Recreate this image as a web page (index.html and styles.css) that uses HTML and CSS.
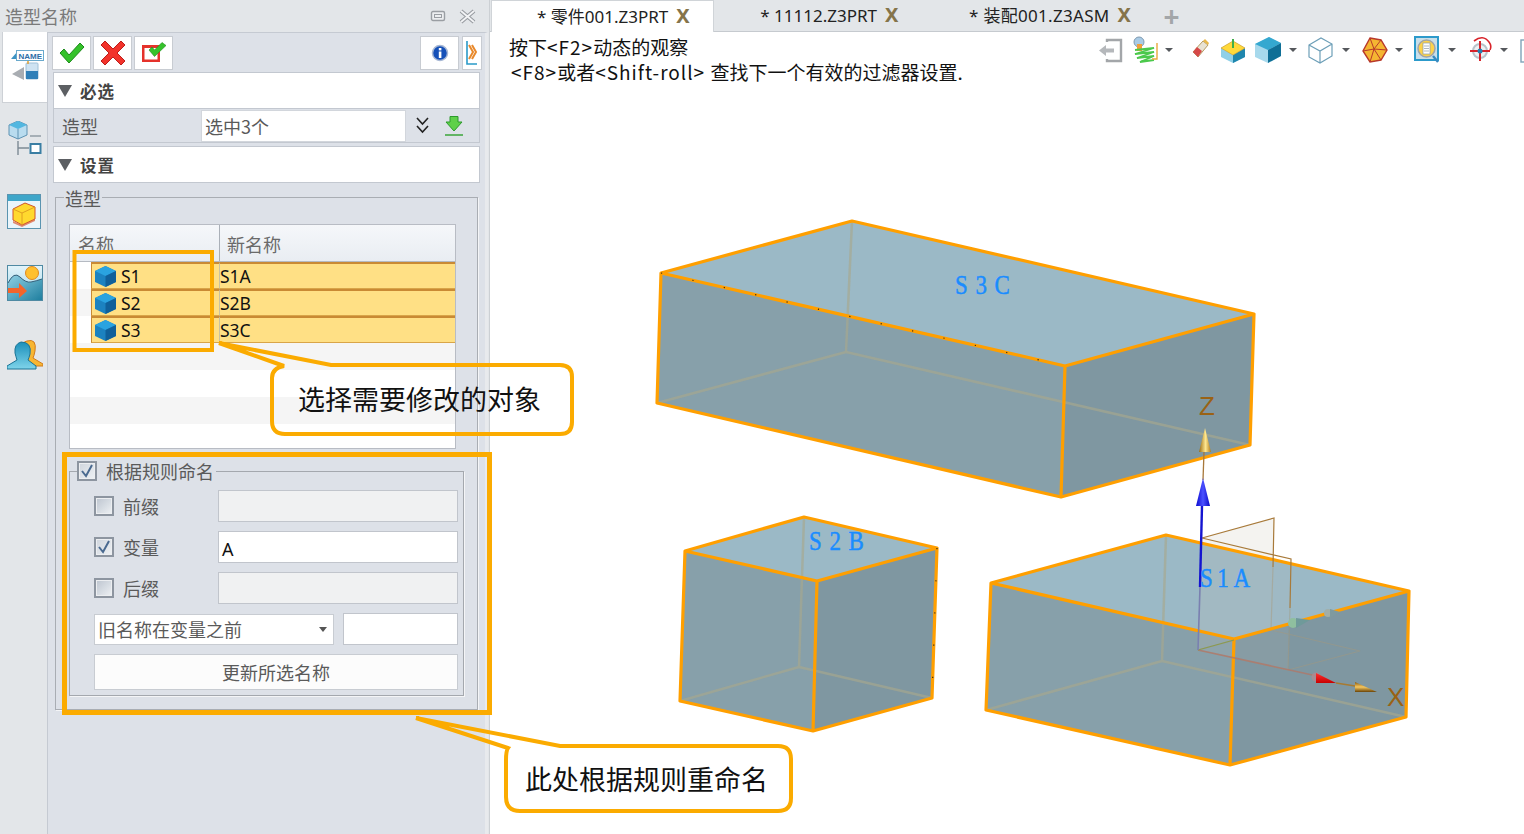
FILE: index.html
```html
<!DOCTYPE html>
<html lang="zh">
<head>
<meta charset="utf-8">
<title>造型名称</title>
<link rel="stylesheet" href="styles.css">
</head>
<body>
<div class="app">
  <aside class="side">
    <header class="title">
      <span>造型名称</span>
      <span class="title-icons">
        <svg width="16" height="12" viewBox="0 0 16 12"><rect x="1.5" y="1.5" width="13" height="9" rx="1.5" fill="#eceef0" stroke="#9a9ea3" stroke-width="1.4"/><rect x="4.5" y="4.5" width="7" height="3" fill="none" stroke="#9a9ea3"/></svg>
        <svg width="19" height="15" viewBox="0 0 19 15"><path d="M3 2 L16 13 M16 2 L3 13" stroke="#979ba0" stroke-width="4"/><path d="M3 2 L16 13 M16 2 L3 13" stroke="#f2f3f5" stroke-width="1.8"/></svg>
      </span>
    </header>
    <div class="side-body">
      <nav class="rail">
        <div class="rail-active">
          <svg width="34" height="32" viewBox="0 0 34 32"><path d="M1 9 L7 2 V9 Z" fill="#3d93c4"/><rect x="6.5" y="0.5" width="27" height="10" fill="#fff" stroke="#6aa9cc"/><text x="8.5" y="9" class="name-ico">NAME</text><path d="M2 24 L14 17 L14 30 Z" fill="#a9adb2"/><rect x="16" y="13" width="12" height="16" rx="1" fill="#cfe3f2" stroke="#9fc0d8"/><rect x="16" y="21" width="12" height="8" fill="#2f7fb8"/><path d="M18 11 V14" stroke="#e0a030" stroke-width="1.5"/></svg>
        </div>
        <svg class="rail-first" width="34" height="37" viewBox="0 0 34 37"><path d="M10 0 L19 4 L19 14 L10 18 L1 14 L1 4 Z" fill="#b9dcef" stroke="#5e93b3"/><path d="M10 0 L19 4 L10 8 L1 4 Z" fill="#52b7e0"/><path d="M10 8 L10 18" stroke="#5e93b3"/><path d="M22 15 H33" stroke="#7d8a94" stroke-width="1.2"/><path d="M10 20 V34 M10 27 H21" stroke="#7d8a94" stroke-width="1.4"/><rect x="22.5" y="23" width="10" height="9" fill="#fff" stroke="#3a7ea3" stroke-width="2"/></svg>
        <svg width="34" height="35" viewBox="0 0 34 35"><rect x="0.5" y="0.5" width="33" height="34" fill="#eaf5fb" stroke="#5a94b0"/><rect x="1" y="1" width="32" height="6" fill="#3fa6c9"/><path d="M6 27 L15 31 L28 25 V27 L15 33 L6 29 Z" fill="#e08a70"/><path d="M6 15 L18 9 L28 13 L28 25 L15 31 L6 26 Z" fill="#ffd92e" stroke="#d0552a"/><path d="M6 15 L15 19 L28 13 M15 19 V31" fill="none" stroke="#e0a020"/></svg>
        <svg width="36" height="38" viewBox="0 0 36 38"><defs><linearGradient id="sky" x1="0" x2="0" y1="0" y2="1"><stop offset="0" stop-color="#e4f4fa"/><stop offset="1" stop-color="#9ed6e8"/></linearGradient><linearGradient id="hill" x1="0" x2="1" y1="0" y2="1"><stop offset="0" stop-color="#8fd0e4"/><stop offset="1" stop-color="#1f7f9f"/></linearGradient></defs><rect x="0.5" y="0.5" width="35" height="35" fill="url(#sky)" stroke="#4f8aa3"/><path d="M1 18 Q7 6 13 12 T24 17 T35 14 V35 H1 Z" fill="url(#hill)"/><path d="M1 18 Q7 6 13 12 T24 17 T35 14" fill="none" stroke="#35607a"/><circle cx="25" cy="8" r="6.5" fill="#ffc02e" stroke="#e08a20"/><path d="M1 23 H12 V18 L20 26 L12 33 V28 H1 Z" fill="#f4652a"/></svg>
        <svg width="36" height="31" viewBox="0 0 36 31"><defs><linearGradient id="person" x1="0" x2="0" y1="0" y2="1"><stop offset="0" stop-color="#1a8fba"/><stop offset="1" stop-color="#7fd4ea"/></linearGradient></defs><path d="M20 2 Q30 -1 28 12 Q27 17 26 19 L36 25 V27 H22 L14 10 Q15 3 20 2 Z" fill="#f7b632" stroke="#d07a1c"/><path d="M14 3 Q25 3 23 15 Q22 19 21 21 L29 27 V30 H0 V27 L10 21 Q9 18 8 14 Q7 5 14 3 Z" fill="url(#person)" stroke="#1a7394"/></svg>
      </nav>
      <main class="dialog">
        <div class="actions">
          <button class="act">
            <svg width="26" height="22" viewBox="0 0 26 22"><path d="M1 11 L5 7 L10 13 L21 1 L25 5 L10 21 Z" fill="#35c22b" stroke="#1c8a1a"/></svg>
          </button>
          <button class="act">
            <svg width="26" height="26" viewBox="0 0 26 26"><path d="M1 5 L5 1 L13 9 L21 1 L25 5 L17 13 L25 21 L21 25 L13 17 L5 25 L1 21 L9 13 Z" fill="#f2332b" stroke="#bd1e1a"/></svg>
          </button>
          <button class="act">
            <svg width="26" height="22" viewBox="0 0 26 22"><path d="M1 3 H19 V20 H1 Z M3.5 6 V17.5 H16.5 V6 Z" fill="#e5322b" fill-rule="evenodd"/><path d="M8 8 L11 5 L13.5 8 L21 0.5 L25 3.5 L13.5 14.5 Z" fill="#35c22b" stroke="#1c8a1a" stroke-width=".6"/></svg>
          </button>
          <span class="act-space"></span>
          <button class="act">
            <svg width="18" height="18" viewBox="0 0 18 18"><circle cx="9" cy="9" r="7.5" fill="#1550b8" stroke="#a8b8d4" stroke-width="1.5"/><rect x="7.8" y="7.5" width="2.6" height="6.5" fill="#fff"/><rect x="7.8" y="4" width="2.6" height="2.4" fill="#fff"/></svg>
          </button>
          <button class="act act-narrow">
            <svg width="12" height="26" viewBox="0 0 12 26"><path d="M1 1 V24 H11" fill="none" stroke="#2a9ac8" stroke-width="1.6"/><path d="M3 5 L7 12 L3 19 M6 5 L10 12 L6 19" fill="none" stroke="#e8892c" stroke-width="2"/></svg>
          </button>
        </div>
        <section class="sect">
          <h2 class="sect-head"><span class="tri"></span>必选</h2>
          <div class="sect-row">
            <span class="row-label">造型</span>
            <span class="pick">选中3个</span>
            <svg class="chev" width="13" height="17" viewBox="0 0 13 17"><path d="M1 1 L6.5 7 L12 1 M1 9 L6.5 15 L12 9" fill="none" stroke="#222" stroke-width="1.6"/></svg>
            <svg class="down" width="18" height="20" viewBox="0 0 18 20"><path d="M5 0.5 H13 V6 H17 L9 15 L1 6 H5 Z" fill="#5fd04a" stroke="#2c9a2c"/><path d="M0 19 H18" stroke="#3aa53a" stroke-width="1.5"/></svg>
          </div>
        </section>
        <section class="sect sect-second">
          <h2 class="sect-head"><span class="tri"></span>设置</h2>
        </section>
        <div class="group">
          <div class="legend">造型</div>
          <div class="grid">
            <div class="grid-head"><span class="gh-name">名称</span><span class="gh-new">新名称</span></div>
            <div class="grid-row">
              <span class="indent"></span>
              <span class="cell-name"><svg width="23" height="23" viewBox="0 0 23 23"><path d="M11.5 1 L22 6 V17 L11.5 22 L1 17 V6 Z" fill="#1c82c0"/><path d="M11.5 1 L22 6 L11.5 11 L1 6 Z" fill="#2aa3e0"/><path d="M11.5 11 L22 6 V17 L11.5 22 Z" fill="#10609a"/></svg>S1</span>
              <span class="cell-new">S1A</span>
            </div>
            <div class="grid-row">
              <span class="indent alt"></span>
              <span class="cell-name"><svg width="23" height="23" viewBox="0 0 23 23"><path d="M11.5 1 L22 6 V17 L11.5 22 L1 17 V6 Z" fill="#1c82c0"/><path d="M11.5 1 L22 6 L11.5 11 L1 6 Z" fill="#2aa3e0"/><path d="M11.5 11 L22 6 V17 L11.5 22 Z" fill="#10609a"/></svg>S2</span>
              <span class="cell-new">S2B</span>
            </div>
            <div class="grid-row">
              <span class="indent"></span>
              <span class="cell-name"><svg width="23" height="23" viewBox="0 0 23 23"><path d="M11.5 1 L22 6 V17 L11.5 22 L1 17 V6 Z" fill="#1c82c0"/><path d="M11.5 1 L22 6 L11.5 11 L1 6 Z" fill="#2aa3e0"/><path d="M11.5 11 L22 6 V17 L11.5 22 Z" fill="#10609a"/></svg>S3</span>
              <span class="cell-new">S3C</span>
            </div>
            <div class="grid-empty alt"></div>
            <div class="grid-empty"></div>
            <div class="grid-empty alt"></div>
          </div>
          <div class="rule">
            <div class="rule-legend">
              <span class="box on"><svg width="14" height="14" viewBox="0 0 14 14"><path d="M2 7 L6 12 L12 1" fill="none" stroke="#4a6a90" stroke-width="2"/></svg></span>
              <span>根据规则命名</span>
            </div>
            <div class="rule-body">
              <div class="rule-row"><span class="box"></span><span class="rule-label">前缀</span><span class="field off"></span></div>
              <div class="rule-row"><span class="box on"><svg width="14" height="14" viewBox="0 0 14 14"><path d="M2 7 L6 12 L12 1" fill="none" stroke="#4a6a90" stroke-width="2"/></svg></span><span class="rule-label">变量</span><span class="field">A</span></div>
              <div class="rule-row"><span class="box"></span><span class="rule-label">后缀</span><span class="field off"></span></div>
              <div class="rule-row"><span class="combo">旧名称在变量之前<span class="caret"></span></span><span class="field short"></span></div>
              <button class="update">更新所选名称</button>
            </div>
          </div>
        </div>
      </main>
    </div>
  </aside>
  <div class="work">
    <div class="tabs">
      <div class="tab active">* 零件001.Z3PRT<span class="x">X</span></div>
      <div class="tab">* 11112.Z3PRT<span class="x">X</span></div>
      <div class="tab tab-wide">* 装配001.Z3ASM<span class="x">X</span></div>
      <span class="plus">+</span>
    </div>
    <div class="view">
      <div class="view-top">
        <div class="hint">
          <div>按下<span class="lat">&lt;F2&gt;</span>动态的观察</div>
          <div class="hint-2"><span class="lat">&lt;F8&gt;</span>或者<span class="lat">&lt;Shift-roll&gt; </span>查找下一个有效的过滤器设置.</div>
        </div>
        <div class="tools">
          <svg width="34" height="30" viewBox="0 0 34 30"><path d="M9 7 V5 H23 V26 H9 V24" fill="none" stroke="#a3a6a9" stroke-width="2.4"/><path d="M1 15.5 L8 10 V13.5 H16 V17.5 H8 V21 Z" fill="#b5b8bb"/></svg>
          <svg width="33" height="30" viewBox="0 0 33 30"><circle cx="7" cy="7" r="5" fill="#a9cbe6" stroke="#7f9ab0"/><rect x="5" y="9" width="5" height="7" fill="#f1a03a"/><path d="M3 15 L22 13 L3 19 L22 17 L5 23 L22 21 L8 27 L22 25" fill="none" stroke="#4cc94c" stroke-width="1.8"/><path d="M25 8 V24 H20" fill="none" stroke="#e8a93c" stroke-width="1.4"/></svg>
          <svg width="27" height="30" viewBox="0 0 27 30"><path class="dd" d="M0 13 H8 L4 17 Z"/></svg>
          <svg width="29" height="30" viewBox="0 0 29 30"><path d="M1 17 L11 6 L16 10 L6 22 Z" fill="#e8e2d2" stroke="#b59a60"/><path d="M1 17 L5 12 L10 16 L6 22 Z" fill="#d64848"/><path d="M11 6 L13 4 L17 8 L16 10 Z" fill="#e9b84a"/></svg>
          <svg width="34" height="30" viewBox="0 0 34 30"><path d="M0 13 L12 6 L24 13 V22 L12 28 L0 22 Z" fill="#8fd0e8"/><path d="M12 20 L24 13 V22 L12 28 Z" fill="#1f86ad"/><path d="M0 13 L12 6 L24 13 L12 20 Z" fill="#ffd93a" stroke="#d59a20" stroke-width=".6"/><path d="M12 4 V13" stroke="#3fae4a" stroke-width="2"/></svg>
          <svg width="34" height="30" viewBox="0 0 34 30"><path d="M0 9 L14 2 L26 8 V21 L13 28 L0 22 Z" fill="#a7d9ec"/><path d="M0 9 L14 2 L26 8 L13 15 Z" fill="#34a8d0"/><path d="M13 15 L26 8 V21 L13 28 Z" fill="#0f6f96"/></svg>
          <svg width="19" height="30" viewBox="0 0 19 30"><path class="dd" d="M0 13 H8 L4 17 Z"/></svg>
          <svg width="34" height="30" viewBox="0 0 34 30"><path d="M1 10 L13 3 L24 9 V21 L12 28 L1 22 Z M1 10 L12 16 L24 9 M12 16 V28" fill="#fff" stroke="#6d9fb8" stroke-width="1.2"/></svg>
          <svg width="20" height="30" viewBox="0 0 20 30"><path class="dd" d="M0 13 H8 L4 17 Z"/></svg>
          <svg width="33" height="30" viewBox="0 0 33 30"><path d="M8 3 L19 5 L25 15 L19 25 L8 27 L1 16 Z" fill="#f4b532" stroke="#b8382a" stroke-width="1.4"/><path d="M8 3 L12 14 L19 5 M1 16 L12 14 L25 15 M12 14 L8 27 M12 14 L19 25" fill="none" stroke="#b8382a"/></svg>
          <svg width="19" height="30" viewBox="0 0 19 30"><path class="dd" d="M0 13 H8 L4 17 Z"/></svg>
          <svg width="34" height="30" viewBox="0 0 34 30"><rect x="1" y="2" width="23" height="23" fill="#c9dfe9" stroke="#2c9acb" stroke-width="2"/><circle cx="12.5" cy="13.5" r="8.5" fill="#fdd34a" stroke="#a0a4a8" stroke-width="1.5"/><rect x="9" y="8" width="7" height="11" fill="#fff" stroke="#8a9aa8" stroke-width=".7"/><path d="M10 11 H15 M10 13.5 H15 M10 16 H15" stroke="#8a9aa8" stroke-width=".7"/><path d="M19 21 L24 27" stroke="#3a8ac0" stroke-width="2.4"/></svg>
          <svg width="22" height="30" viewBox="0 0 22 30"><path class="dd" d="M0 13 H8 L4 17 Z"/></svg>
          <svg width="30" height="30" viewBox="0 0 30 30"><circle cx="10" cy="16" r="7" fill="#eef1f3" stroke="#b9c3ca" stroke-width="2"/><path d="M0 16 H20 M10 6 V26" stroke="#d8232a" stroke-width="2"/><path d="M4 6 Q13 -1 19 7 Q22 11 20 15" fill="none" stroke="#d8232a" stroke-width="1.6"/><circle cx="10" cy="16" r="2.5" fill="#2a7fb0"/></svg>
          <svg width="20" height="30" viewBox="0 0 20 30"><path class="dd" d="M0 13 H8 L4 17 Z"/></svg>
          <svg width="10" height="30" viewBox="0 0 10 30"><rect x="1" y="5" width="12" height="22" fill="#fff" stroke="#7fa3b8" stroke-width="1.4"/></svg>
        </div>
      </div>
      <svg class="model" width="1034" height="802" viewBox="490 32 1034 802">
        <defs>
          <linearGradient id="gold" x1="0" x2="1" y1="0" y2="0"><stop offset="0" stop-color="#9a6a10"/><stop offset=".55" stop-color="#ffe890"/><stop offset="1" stop-color="#b07a18"/></linearGradient>
          <linearGradient id="goldx" x1="0" x2="0" y1="0" y2="1"><stop offset="0" stop-color="#8a5a10"/><stop offset=".5" stop-color="#f6c860"/><stop offset="1" stop-color="#6a4408"/></linearGradient>
          <linearGradient id="blue" x1="0" x2="1" y1="0" y2="0"><stop offset="0" stop-color="#0a0ad0"/><stop offset=".5" stop-color="#4a50ff"/><stop offset="1" stop-color="#0808c8"/></linearGradient>
          <linearGradient id="redc" x1="0" x2="0" y1="0" y2="1"><stop offset="0" stop-color="#ff3030"/><stop offset="1" stop-color="#c80000"/></linearGradient>
        </defs>
        <!-- S3C -->
        <path class="f-top" d="M661 273 L852 221 L1254 314 L1065 366 Z"/>
        <path class="f-front" d="M661 273 L1065 366 L1061 497 L657 403 Z"/>
        <path class="f-right" d="M1065 366 L1254 314 L1250 445 L1061 497 Z"/>
        <path class="hid" d="M852 221 L846 352 M846 352 L657 403 M846 352 L1250 445"/>
        <path class="edge" d="M661 273 L852 221 L1254 314 L1065 366 Z M661 273 L657 403 L1061 497 L1250 445 L1254 314 M1065 366 L1061 497"/>
        <path class="specks" d="M661 273 L1065 366"/>
        <text class="lbl" transform="translate(955 294) scale(.82 1)" textLength="67">S3C</text>
        <!-- S2B -->
        <path class="f-top" d="M685 551 L804 517 L937 548 L817 581 Z"/>
        <path class="f-front" d="M685 551 L817 581 L813 731 L680 701 Z"/>
        <path class="f-right" d="M817 581 L937 548 L932 698 L813 731 Z"/>
        <path class="hid" d="M804 517 L799 667 M799 667 L680 701 M799 667 L932 698"/>
        <path class="edge" d="M685 551 L804 517 L937 548 L817 581 Z M685 551 L680 701 L813 731 L932 698 L937 548 M817 581 L813 731"/>
        <path class="specks" d="M937 548 L932 698"/>
        <text class="lbl" transform="translate(809 550) scale(.82 1)" textLength="67">S2B</text>
        <!-- S1A -->
        <path class="f-top" d="M991 583 L1166 535 L1409 591 L1234 639 Z"/>
        <path class="f-front" d="M991 583 L1234 639 L1230 765 L986 710 Z"/>
        <path class="f-right" d="M1234 639 L1409 591 L1406 717 L1230 765 Z"/>
        <path class="hid" d="M1166 535 L1162 661 M1162 661 L986 710 M1162 661 L1406 717"/>
        <!-- triad plane -->
        <path class="plane-top" d="M1202 538 L1274 518 L1273.5 559 L1202 543 Z"/>
        <path class="plane" d="M1202 543 L1273.5 559 L1271 630 L1198 650 Z"/>
        <path class="plane" d="M1202 543 L1290 564 L1288 670 L1198 650 Z"/>
        <path class="p-faint" d="M1273 567 L1271 630 L1198 650 M1290 608 L1288 670 L1198 650 M1271 630 L1360 651 L1288 670"/>
        <path class="edge" d="M991 583 L1166 535 L1409 591 L1234 639 Z M991 583 L986 710 L1230 765 L1406 717 L1409 591 M1234 639 L1230 765"/>
        <path class="p-line" d="M1202 538 L1274 518 L1273 567 M1202 538 L1291 559 L1290 608"/>
        <circle cx="1293" cy="623" r="5" fill="#8fbf9f"/><path d="M1296 618 L1310 620 L1296 628 Z" fill="#6f9a9a"/>
        <circle cx="1328" cy="613" r="4" fill="#a2aea8"/><path d="M1330 609 L1340 612 L1330 618 Z" fill="#7f9a9f"/>
        <path d="M1198 650 L1317 676" stroke="#b0786a" stroke-width="1.6" opacity=".8"/>
        <path d="M1198 650 L1234 640" stroke="#8a9a50" stroke-width="1.2"/>
        <path d="M1198 650 L1200 587" stroke="#7a80b0" stroke-width="1.6"/>
        <path d="M1200 587 L1202 506" stroke="#1414d0" stroke-width="2.4"/>
        <path d="M1204 452 L1203 480" stroke="#a8783a" stroke-width="1.3"/>
        <path d="M1203 478 L1210 506 L1196 506 Z" fill="url(#blue)"/>
        <path d="M1205 428 L1211 452 L1199 452 Z" fill="url(#gold)"/>
        <circle cx="1316" cy="677" r="4.5" fill="#b08a90" opacity=".8"/>
        <path d="M1336 683 L1316 673 L1316 683 Z" fill="url(#redc)"/>
        <path d="M1336 683 L1355 686" stroke="#a87a30" stroke-width="1.3"/>
        <path d="M1377 692 L1355 682 L1355 692 Z" fill="url(#goldx)"/>
        <text x="1199" y="415" class="axis">Z</text>
        <text x="1387" y="706" class="axis">X</text>
        <text class="lbl" transform="translate(1200 587) scale(.82 1)" textLength="61">S1A</text>
      </svg>
    </div>
  </div>
</div>
<svg class="overlay" width="1524" height="834" viewBox="0 0 1524 834">
  <rect class="mark mark-a" x="74.5" y="252" width="137.5" height="98"/>
  <rect class="mark mark-b" x="64.5" y="454.5" width="425" height="258"/>
  <path class="mark mark-a" d="M219 343 L331 365 H560 Q572 365 572 377 V422 Q572 434 560 434 H285 Q272 434 272 421 V378 Q272 368 284 366 Z"/>
  <path class="mark mark-a" d="M416 718 L560 746 H778 Q791 746 791 759 V798 Q791 811 778 811 H520 Q506 811 506 797 V760 Q506 751 508 748 Z"/>
  <text class="call" x="298" y="410">选择需要修改的对象</text>
  <text class="call" x="525" y="790">此处根据规则重命名</text>
</svg>
</body>
</html>
```

FILE: styles.css
```css
* { box-sizing: border-box; }
html, body { margin: 0; padding: 0; }
body {
  position: relative;
  width: 1524px;
  height: 834px;
  overflow: hidden;
  font-family: "Noto Sans CJK SC", "Noto Sans", sans-serif;
  font-size: 18px;
  color: #5a5a5a;
  background: #fff;
}
.app { display: flex; width: 1524px; height: 834px; }
.side {
  width: 490px;
  flex: none;
  display: flex;
  flex-direction: column;
  background: #e3e6e9;
}
.title {
  height: 32px;
  flex: none;
  display: flex;
  align-items: center;
  justify-content: space-between;
  padding: 0 13px 0 5px;
  color: #7a7a7a;
  line-height: 32px;
}
.title-icons { display: flex; align-items: center; gap: 12px; }
.side-body { flex: 1; display: flex; min-height: 0; }
.rail {
  width: 47px;
  flex: none;
  display: flex;
  flex-direction: column;
  align-items: flex-start;
  gap: 36px;
  padding-left: 7px;
  background: #e3e6e9;
}
.rail-active {
  width: 46px;
  height: 71px;
  margin-left: -5px;
  margin-bottom: -18px;
  padding: 18px 0 0 7px;
  background: #fff;
  border: 1px solid #cdd1d6;
  border-right: none;
  border-top: none;
}
.rail svg { display: block; flex: none; }
.rail-first { margin-left: 1px; }
.name-ico { font: 700 8px "Liberation Sans", sans-serif; fill: #2d6ea8; }
.dialog {
  width: 441px;
  flex: none;
  background: #dde1e8;
  border-top: 1px solid #c5cad2;
  border-left: 1px solid #c5cad2;
  border-right: 3px solid #e8eaed;
  padding: 3px 0 0 4px;
}
.actions { display: flex; height: 34px; gap: 2px; padding-right: 3px; }
.act {
  width: 39px;
  height: 34px;
  padding: 0;
  display: flex;
  align-items: center;
  justify-content: center;
  background: #fff;
  border: 1px solid #c8ccd2;
}
.act-space { flex: 1; }
.act-narrow { width: 20px; margin-left: 1px; }
.sect {
  width: 427px;
  margin: 2px 0 0 1px;
  border: 1px solid #c3c8d0;
  border-top-color: #c3c8d0;
}
.sect-second { margin-top: 3px; }
.sect-head {
  margin: 0;
  height: 35px;
  background: #fff;
  display: flex;
  align-items: center;
  font-size: 16.5px;
  font-weight: 700;
  color: #444;
  letter-spacing: 1px;
}
.tri {
  width: 0;
  height: 0;
  margin: 0 8px 0 4px;
  border-left: 7px solid transparent;
  border-right: 7px solid transparent;
  border-top: 12px solid #5c5f63;
}
.sect-row {
  height: 34px;
  display: flex;
  align-items: center;
  border-top: 1px solid #c3c8d0;
  padding-left: 8px;
}
.row-label { width: 139px; flex: none; }
.pick {
  width: 205px;
  height: 32px;
  flex: none;
  background: #fff;
  border: 1px solid #d2d6dc;
  padding-left: 3px;
  line-height: 30px;
}
.chev { margin-left: 10px; flex: none; }
.down { margin-left: 16px; flex: none; }
.group {
  width: 423px;
  height: 513px;
  margin: 14px 0 0 3px;
  border: 1px solid #a9adb3;
  box-shadow: 1px 1px 0 #f4f5f7;
}
.legend {
  width: fit-content;
  height: 20px;
  margin: -10px 0 0 8px;
  padding: 0 1px;
  line-height: 20px;
  background: #dde1e8;
}
.grid {
  width: 387px;
  height: 225px;
  margin: 16px 0 0 13px;
  border: 1px solid #b8bcc4;
  background: #fff;
  display: flex;
  flex-direction: column;
  overflow: hidden;
}
.grid-head {
  height: 37px;
  flex: none;
  display: flex;
  align-items: center;
  background: linear-gradient(#f5f7fa, #e9edf2);
  border-bottom: 1px solid #b5bac2;
  color: #6a6a6a;
}
.gh-name { width: 150px; padding-left: 8px; align-self: stretch; line-height: 39px; border-right: 1px solid #aab0b8; }
.gh-new { padding-left: 7px; line-height: 39px; align-self: stretch; }
.grid-row {
  height: 27px;
  flex: none;
  display: flex;
  color: #111;
  font-family: "Noto Sans", sans-serif;
  font-size: 17.5px;
}
.indent { width: 21px; flex: none; background: #fff; }
.indent.alt { background: #f5f5f5; }
.cell-name, .cell-new {
  display: flex;
  align-items: center;
  line-height: 25px;
  background: #ffe085;
  border-top: 2px solid #c98a34;
  border-bottom: 1px solid #d9a548;
}
.cell-name { width: 129px; flex: none; padding-left: 2px; gap: 4px; border-left: 1px solid #c98a34; border-right: 1px solid #c9c2a0; }
.cell-name svg { flex: none; }
.cell-new { flex: 1; }
.grid-empty { height: 27px; flex: none; }
.grid-empty.alt { background: #f5f5f5; }
.rule {
  width: 395px;
  height: 225px;
  margin: 22px 0 0 13px;
  border: 1px solid #a4a8ae;
  box-shadow: 1px 1px 0 #f4f5f7;
}
.rule-legend {
  width: fit-content;
  height: 20px;
  margin: -11px 0 0 7px;
  padding-right: 2px;
  display: flex;
  align-items: center;
  gap: 9px;
  line-height: 20px;
  background: #dde1e8;
}
.box {
  width: 20px;
  height: 20px;
  flex: none;
  display: flex;
  align-items: center;
  justify-content: center;
  border: 2px solid #8d95a0;
  box-shadow: inset 0 0 0 1px #eceef1;
  background: linear-gradient(135deg, #bcc4cf, #eef1f4);
}
.box.on { background: linear-gradient(135deg, #cfd5dd, #eef1f4); }
.rule-body { display: flex; flex-direction: column; gap: 9px; padding: 9px 5px 0 24px; }
.rule-row { display: flex; align-items: center; height: 32px; }
.rule-label { margin-left: 9px; letter-spacing: 0; }
.field {
  width: 240px;
  height: 32px;
  margin-left: auto;
  background: #fff;
  border: 1px solid #c1c5cc;
  padding-left: 3px;
  color: #111;
  font-family: "Noto Sans", sans-serif;
  line-height: 34px;
}
.field.off { background: #f0f1f2; }
.field.short { width: 115px; }
.combo {
  width: 240px;
  height: 31px;
  flex: none;
  display: flex;
  align-items: center;
  padding-left: 3px;
  background: #fff;
  border: 1px solid #c8ccd2;
  line-height: 31px;
}
.caret {
  width: 0;
  height: 0;
  margin-left: auto;
  margin-right: 6px;
  border-left: 4.5px solid transparent;
  border-right: 4.5px solid transparent;
  border-top: 5px solid #555;
}
.update {
  height: 36px;
  padding: 0;
  background: #fcfcfc;
  border: 1px solid #c8ccd2;
  font: inherit;
  color: #5a5a5a;
}
.work { flex: 1; min-width: 0; display: flex; flex-direction: column; border-left: 1px solid #ccd0d4; margin-left: -1px; }
.tabs {
  height: 32px;
  flex: none;
  display: flex;
  background: #e3e6e9;
  border-bottom: 1px solid #c6cacf;
  color: #222;
  font-family: "Noto Sans", "Noto Sans CJK SC", sans-serif;
  font-size: 17px;
}
.tab {
  height: 32px;
  padding: 0 23px 0 46px;
  line-height: 32px;
  white-space: nowrap;
  display: flex;
}
.tab.active {
  background: #fff;
  border: 1px solid #d0d4d8;
  border-bottom: none;
  margin-left: 1px;
  padding-left: 45px;
  padding-right: 22px;
}
.tab-wide { letter-spacing: .3px; }
.x { width: 15px; margin-left: 8px; font-weight: 700; color: #85744a; font-size: 20px; letter-spacing: 0; line-height: 30px; }
.plus { margin-left: 8px; color: #a3a6a9; font-size: 28px; font-weight: 700; line-height: 32px; }
.view { flex: 1; position: relative; background: #fff; min-height: 0; }
.view-top {
  position: relative;
  z-index: 1;
  display: flex;
  justify-content: space-between;
  padding: 2px 0 0 19px;
  overflow: hidden;
}
.hint {
  color: #111;
  font-size: 19px;
  line-height: 25px;
  white-space: nowrap;
  font-family: "Noto Sans CJK SC", "Noto Sans", sans-serif;
}
.lat { letter-spacing: 1px; }
.hint-2 { margin-left: 2px; }
.tools { display: flex; flex: none; width: 426px; height: 30px; margin-top: 1px; margin-left: -1px; }
.tools svg { display: block; flex: none; }
.dd { fill: #55585c; }
.model { position: absolute; left: 0; top: 0; }
.f-top { fill: #9bb9c6; }
.f-front { fill: #87a0aa; }
.f-right { fill: #7f97a1; }
.hid { fill: none; stroke: #a8a88e; stroke-opacity: .65; stroke-width: 2.5; }
.edge { fill: none; stroke: #ff9f00; stroke-width: 3.2; stroke-linejoin: round; }
.specks { fill: none; stroke: #3a2a10; stroke-width: 1.2; stroke-dasharray: 1.2 31; }
.plane-top { fill: #f4f3f0; }
.plane { fill: #b8bcb6; fill-opacity: .14; }
.p-line { fill: none; stroke: #a87a3a; stroke-width: 1.2; }
.p-faint { fill: none; stroke: #a89a7a; stroke-opacity: .45; stroke-width: 1.2; }
.lbl {
  font-family: "Liberation Serif", serif;
  font-size: 28px;
  font-weight: 400;
  fill: #1a8cff;
  stroke: #1a8cff;
  stroke-width: .5;
}
.axis {
  font-family: "Liberation Sans", sans-serif;
  font-size: 26px;
  fill: #9a6214;
}
.overlay { position: absolute; left: 0; top: 0; pointer-events: none; }
.mark { fill: none; stroke: #fbab00; }
.mark-a { stroke-width: 4; }
.mark-b { stroke-width: 5; }
.call {
  font-family: "Noto Sans CJK SC", sans-serif;
  font-size: 27px;
  fill: #111;
}
```
